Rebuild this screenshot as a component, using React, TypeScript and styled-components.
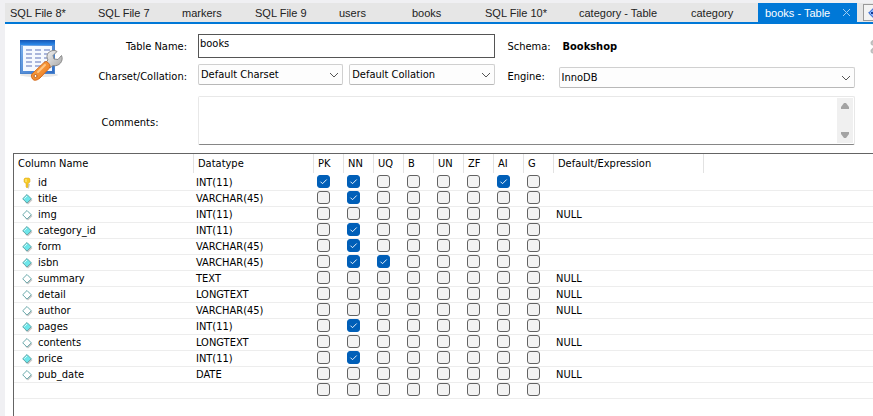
import React, { useState } from 'react';
import styled, { createGlobalStyle } from 'styled-components';

const GlobalStyle = createGlobalStyle`
  *, *::before, *::after { box-sizing: border-box; }
  body { margin: 0; background: #f0f0f3; color: #000; overflow: hidden; }
  body, input, select, textarea, button {
    font-family: "DejaVu Sans Condensed", "DejaVu Sans", sans-serif;
    font-size: 11px;
    line-height: 14px;
  }
`;

const Window = styled.div`
  display: flex;
  flex-direction: column;
  min-height: 100vh;
  padding: 3px 0 0 5px;
  overflow: hidden;
`;

const TabBar = styled.nav`
  display: flex;
  flex: none;
  height: 21px;
  overflow: hidden;
  background: #e6e6e6;
  border-bottom: 2px solid #0078d7;
`;

const Tab = styled.button<{ $width: number; $active?: boolean }>`
  display: flex;
  flex: none;
  align-items: center;
  justify-content: space-between;
  width: ${p => p.$width}px;
  padding: 0 6px 0 ${p => (p.$active ? 7 : 5)}px;
  border: 0;
  background: ${p => (p.$active ? '#0078d7' : 'transparent')};
  color: ${p => (p.$active ? '#fff' : '#222')};
  font-family: "Liberation Sans", Arial, sans-serif;
  white-space: nowrap;
`;

const NextTab = styled.button`
  flex: none;
  width: 24px;
  height: 17px;
  margin: 1px 0 0 6px;
  padding: 0 0 0 4px;
  border: 1px solid #999;
  background: #f3f3f3;
  text-align: left;
  line-height: 0;
`;

const Editor = styled.main`
  flex: 1;
  display: flex;
  flex-direction: column;
  background: #fff;
`;

const FormRow = styled.div`
  display: flex;
  padding: 10px 0 8px 15px;
`;

const Form = styled.form`
  flex: 1;
  display: grid;
  grid-template-columns: 42px 114px minmax(0, 1fr) 42px minmax(0, 1fr);
  grid-template-rows: 24px 24px auto;
  gap: 6px 11px;
`;

const IconCell = styled.div`
  grid-row: span 2;
  padding-top: 4px;
  line-height: 0;
`;

const Label = styled.label<{ $align: 'left' | 'right' | 'center' }>`
  align-self: center;
  padding: ${p => (p.$align === 'center' ? 6 : 2)}px 0 0 ${p => (p.$align === 'left' ? 2 : 0)}px;
  text-align: ${p => p.$align};
  white-space: nowrap;
`;

const NameInput = styled.input`
  width: 100%;
  height: 24px;
  padding: 0 0 6px 1px;
  border: 1px solid #555;
  outline: 0;
`;

const SchemaName = styled.strong`
  align-self: center;
  padding: 2px 0 0 4px;
`;

const SelectPair = styled.div`
  display: grid;
  grid-template-columns: 1fr 1fr;
  align-self: start;
  gap: 6px;
`;

const SelectBox = styled.div`
  display: grid;
  align-self: end;
  align-items: center;
  > * { grid-area: 1 / 1; }
  > svg { justify-self: end; margin-right: 4px; pointer-events: none; }
`;

const Select = styled.select`
  appearance: none;
  width: 100%;
  height: 21px;
  padding: 0 18px 0 2px;
  border: 1px solid #d0d0d0;
  border-bottom-color: #b8b8b8;
  border-radius: 2px;
  background: #fdfdfd;
  color: #000;
`;

const CommentCell = styled.div`
  grid-column: 3 / -1;
  display: flex;
  height: 49px;
  margin-top: 2px;
  border: 1px solid #e8e8e8;
  border-bottom-color: #868686;
  border-radius: 2px;
`;

const Comments = styled.textarea`
  flex: 1;
  height: 100%;
  padding: 2px;
  border: 0;
  outline: 0;
  resize: none;
  overflow: hidden;
`;

const ScrollBar = styled.div`
  display: flex;
  flex-direction: column;
  justify-content: space-between;
  width: 16px;
  margin: 1px;
  padding: 5px 4px;
  background: #f0f0f0;
`;

const ScrollButton = styled.button`
  padding: 0;
  border: 0;
  background: none;
  line-height: 0;
`;

const Collapse = styled.button`
  flex: none;
  align-self: flex-start;
  width: 18px;
  margin-top: 6px;
  padding: 0 0 0 15px;
  border: 0;
  background: none;
  overflow: hidden;
  line-height: 0;
`;

const Grid = styled.div`
  flex: 1;
  margin-left: 8px;
  border: solid #646464;
  border-width: 1px 0 0 1px;
`;

const Table = styled.table`
  width: 100%;
  table-layout: fixed;
  border-collapse: separate;
  border-spacing: 0;
`;

const Col = styled.col<{ $width?: number }>`
  width: ${p => (p.$width ? `${p.$width}px` : 'auto')};
`;

const Head = styled.th`
  height: 19px;
  padding: 1px 0 0 4px;
  border-right: 1px solid #e2e2e2;
  font-weight: 400;
  text-align: left;
  white-space: nowrap;
  &:last-child { border-right: 0; }
`;

const Row = styled.tr<{ $first?: boolean }>`
  height: ${p => (p.$first ? 18 : 16)}px;
`;

const Cell = styled.td`
  padding: 0 0 0 2px;
  border-bottom: 1px solid #ededed;
  line-height: 15px;
  vertical-align: bottom;
  white-space: nowrap;
`;

const NameBox = styled.div`
  display: flex;
  align-items: center;
  gap: 5px;
  padding-left: 6px;
`;

const CheckCell = styled(Cell)`
  padding: 0 0 2px 3px;
  line-height: 0;
`;

const Check = styled.input`
  appearance: none;
  display: block;
  width: 13px;
  height: 13px;
  margin: 0;
  border: 1px solid #626262;
  border-radius: 3px;
  background: #f3f3f3;
  &:checked {
    border-color: #005fb8;
    background: #005fb8 url("data:image/svg+xml,%3Csvg xmlns='http://www.w3.org/2000/svg' viewBox='0 0 11 11'%3E%3Cpath d='M2.5 5.7 4.5 7.7 8.7 3.5' fill='none' stroke='%23fff' stroke-width='.9'/%3E%3C/svg%3E");
  }
`;

const FLAGS = ['PK', 'NN', 'UQ', 'B', 'UN', 'ZF', 'AI', 'G'];

const TABS: [string, number][] = [
  ['SQL File 8*', 88], ['SQL File 7', 84], ['markers', 73], ['SQL File 9', 84], ['users', 73],
  ['books', 73], ['SQL File 10*', 94], ['category - Table', 112], ['category', 72],
];

type Column = { name: string; type: string; flags: string[]; fallback?: string };

const COLUMNS: Column[] = [
  { name: 'id', type: 'INT(11)', flags: ['PK', 'NN', 'AI'] },
  { name: 'title', type: 'VARCHAR(45)', flags: ['NN'] },
  { name: 'img', type: 'INT(11)', flags: [], fallback: 'NULL' },
  { name: 'category_id', type: 'INT(11)', flags: ['NN'] },
  { name: 'form', type: 'VARCHAR(45)', flags: ['NN'] },
  { name: 'isbn', type: 'VARCHAR(45)', flags: ['NN', 'UQ'] },
  { name: 'summary', type: 'TEXT', flags: [], fallback: 'NULL' },
  { name: 'detail', type: 'LONGTEXT', flags: [], fallback: 'NULL' },
  { name: 'author', type: 'VARCHAR(45)', flags: [], fallback: 'NULL' },
  { name: 'pages', type: 'INT(11)', flags: ['NN'] },
  { name: 'contents', type: 'LONGTEXT', flags: [], fallback: 'NULL' },
  { name: 'price', type: 'INT(11)', flags: ['NN'] },
  { name: 'pub_date', type: 'DATE', flags: [], fallback: 'NULL' },
  { name: '', type: '', flags: [] },
];

const Chevron = () => (
  <svg width="10" height="6" viewBox="0 0 10 6" aria-hidden="true">
    <path d="M1 1 5 5 9 1" fill="none" stroke="#555" strokeWidth="1" />
  </svg>
);

const TableIcon = () => (
  <svg width="44" height="44" viewBox="0 0 44 44" aria-hidden="true">
    <defs>
      <linearGradient id="frame" x2="1" y2="1">
        <stop stopColor="#7fb4ee" /><stop offset="1" stopColor="#2f6cc4" />
      </linearGradient>
      <linearGradient id="title" x2="0" y2="1">
        <stop stopColor="#1455b4" /><stop offset="1" stopColor="#2c8bec" />
      </linearGradient>
      <linearGradient id="handle" x2="1" y2="1">
        <stop stopColor="#ffae4d" /><stop offset="1" stopColor="#e8751c" />
      </linearGradient>
      <linearGradient id="steel" x2="1" y2="1">
        <stop stopColor="#f6f6f6" /><stop offset="1" stopColor="#a5a5a5" />
      </linearGradient>
    </defs>
    <ellipse cx="19" cy="37" rx="19" ry="2" fill="#e7e7e7" />
    <rect x="0.5" y="2.5" width="34" height="33" fill="url(#frame)" stroke="#4a83cc" />
    <rect x="0" y="2" width="35" height="5" fill="url(#title)" />
    <rect x="3" y="8" width="29" height="25" fill="#f5f9ff" />
    {[6, 15, 24].map(x =>
      [11, 15, 19, 23, 27].map(y => (
        <rect key={`${x}-${y}`} x={x} y={y} width="6" height="2" fill="#a9b6dc" />
      )),
    )}
    <path d="M25 25 28 22C25 17 29 12 35 12.500L37 13.500 33 17.500 34 21 38 21.500 41.500 17.500C44 23 39 29 33 27.500L30 30Z" fill="url(#steel)" stroke="#8a8a8a" strokeWidth="1" />
    <path d="M12 36 24 24.500Q26 22.500 28 24.500L29.500 26.500Q31 28.500 29 30.500L20 40Q15 44 12.500 41 10.500 38 12 36Z" fill="url(#handle)" stroke="#d46a1c" strokeWidth="1" />
    <path d="M18 34 25 27" stroke="#ffc684" strokeWidth="2" strokeLinecap="round" />
    <circle cx="15.500" cy="38" r="1.500" fill="#fff" stroke="#b9601f" />
  </svg>
);

const KeyIcon = () => (
  <svg width="11" height="12" viewBox="0 0 11 12" aria-hidden="true">
    <path d="M5 6 8 7 7 11 6 12Z" fill="#ccc" />
    <path d="M3 1H7L8 2V5L6 6.500V10L5 11 4 10V6.500L2 5V2Z" fill="#f6ca26" stroke="#d9a51c" strokeWidth=".5" />
    <path d="M4 2V5" stroke="#fff2a0" />
  </svg>
);

const DiamondIcon = ({ filled }: { filled: boolean }) => (
  <svg width="11" height="12" viewBox="0 0 11 12" aria-hidden="true">
    <path d="M5.500 3 10.500 7 6 11.500 3 9Z" fill="#c8c8c8" />
    <path d="M5 1.500 9.300 5.800 5 10.100 .7 5.800Z" fill={filled ? '#6ee6ea' : '#fff'} stroke="#5a9fa2" strokeWidth=".9" />
    {filled && <path d="M5 3 2.300 5.700" stroke="#d5ffff" />}
  </svg>
);

export default function App() {
  const [columns, setColumns] = useState(COLUMNS);
  const toggle = (index: number, flag: string) =>
    setColumns(list => list.map((c, i) => (i !== index ? c : {
      ...c,
      flags: c.flags.includes(flag) ? c.flags.filter(f => f !== flag) : [...c.flags, flag],
    })));

  return (
    <Window>
      <GlobalStyle />
      <TabBar>
        {TABS.map(([title, width]) => <Tab key={title} $width={width}>{title}</Tab>)}
        <Tab $width={99} $active>
          books - Table
          <svg width="9" height="9" viewBox="0 0 9 9" aria-hidden="true">
            <path d="M1 1 8 8M8 1 1 8" stroke="#9fcdf3" strokeWidth="1" />
          </svg>
        </Tab>
        <NextTab aria-label="Next tab">
          <svg width="12" height="12" viewBox="0 0 12 12">
            <path d="M.7 6 6 .7 11.300 6 6 11.300Z" fill="#8bb8ff" stroke="#2257c7" />
            <path d="M3 6H9" stroke="#123a94" strokeWidth="2" />
          </svg>
        </NextTab>
      </TabBar>
      <Editor>
        <FormRow>
          <Form>
            <IconCell><TableIcon /></IconCell>
            <Label $align="right" htmlFor="table-name">Table Name:</Label>
            <NameInput id="table-name" defaultValue="books" />
            <Label as="span" $align="left">Schema:</Label>
            <SchemaName>Bookshop</SchemaName>
            <Label $align="right" htmlFor="charset">Charset/Collation:</Label>
            <SelectPair>
              <SelectBox>
                <Select id="charset"><option>Default Charset</option></Select>
                <Chevron />
              </SelectBox>
              <SelectBox>
                <Select aria-label="Collation"><option>Default Collation</option></Select>
                <Chevron />
              </SelectBox>
            </SelectPair>
            <Label $align="left" htmlFor="engine">Engine:</Label>
            <SelectBox>
              <Select id="engine"><option>InnoDB</option></Select>
              <Chevron />
            </SelectBox>
            <span />
            <Label $align="center" htmlFor="comments">Comments:</Label>
            <CommentCell>
              <Comments id="comments" />
              <ScrollBar>
                <ScrollButton type="button" aria-label="Scroll up">
                  <svg width="8" height="6" viewBox="0 0 8 6"><path d="M3 0H5L8 4V6H0V4Z" fill="#a3a3a3" /></svg>
                </ScrollButton>
                <ScrollButton type="button" aria-label="Scroll down">
                  <svg width="8" height="6" viewBox="0 0 8 6"><path d="M0 0H8V2L5 6H3L0 2Z" fill="#a3a3a3" /></svg>
                </ScrollButton>
              </ScrollBar>
            </CommentCell>
          </Form>
          <Collapse aria-label="Collapse header">
            <svg width="12" height="14" viewBox="0 0 12 14">
              <path d="M1 3 3 1 6 4M1 3 3 5M1 11 3 9 6 12M1 11 3 13" fill="none" stroke="#bbb" strokeWidth="2" />
            </svg>
          </Collapse>
        </FormRow>
        <Grid>
          <Table>
            <colgroup>
              <Col $width={180} />
              <Col $width={120} />
              {FLAGS.map(f => <Col key={f} $width={30} />)}
              <Col $width={150} />
              <Col />
            </colgroup>
            <thead>
              <tr>
                {['Column Name', 'Datatype', ...FLAGS, 'Default/Expression'].map(h => <Head key={h} scope="col">{h}</Head>)}
                <Head as="td" />
              </tr>
            </thead>
            <tbody>
              {columns.map((c, i) => (
                <Row key={c.name} $first={i === 0}>
                  <Cell>
                    {c.name && (
                      <NameBox>
                        {c.flags.includes('PK') ? <KeyIcon /> : <DiamondIcon filled={c.flags.includes('NN')} />}
                        {c.name}
                      </NameBox>
                    )}
                  </Cell>
                  <Cell>{c.type}</Cell>
                  {FLAGS.map(f => (
                    <CheckCell key={f}>
                      <Check
                        type="checkbox"
                        aria-label={`${c.name || 'new column'} ${f}`}
                        checked={c.flags.includes(f)}
                        onChange={() => toggle(i, f)}
                      />
                    </CheckCell>
                  ))}
                  <Cell>{c.fallback}</Cell>
                  <Cell />
                </Row>
              ))}
            </tbody>
          </Table>
        </Grid>
      </Editor>
    </Window>
  );
}
